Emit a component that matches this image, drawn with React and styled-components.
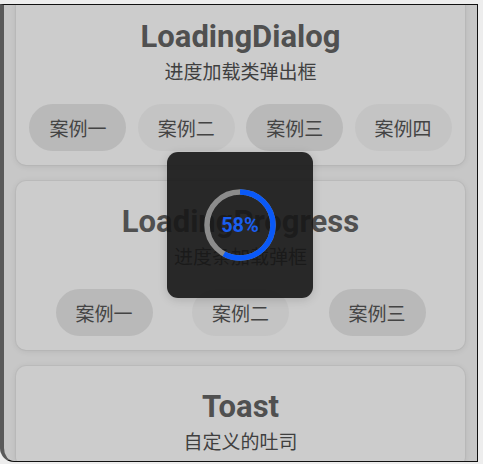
import React from "react"
import styled, { createGlobalStyle } from "styled-components"

const GlobalStyle = createGlobalStyle`
  html, body {
    margin: 0;
    padding: 0;
    background: #ededed;
    font-family: "Roboto", "Noto Sans CJK SC", sans-serif;
  }
`

const Screen = styled.div`
  position: relative;
  box-sizing: border-box;
  margin-top: 4px;
  width: 478px;
  height: 458px;
  overflow: hidden;
  background: #c7c7c7;
  border-top: 1px solid #111;
  border-right: 1px solid #111;
  border-bottom: 1px solid #111;
  border-left: 4px solid #5a5a5a;
  border-bottom-left-radius: 14px;
`

const List = styled.div`
  display: flex;
  flex-direction: column;
  gap: 16px;
  margin-top: -9px;
  padding: 0 12px;
`

const Card = styled.section`
  display: flex;
  flex-direction: column;
  align-items: center;
  padding: 25px 0 14px;
  background: #cccccc;
  border-radius: 10px;
  box-shadow: 0 0 0 1px rgba(0, 0, 0, 0.03), 0 1px 6px rgba(0, 0, 0, 0.1);
`

const Title = styled.h2`
  margin: 0;
  height: 32px;
  line-height: 32px;
  font-size: 31px;
  font-weight: 700;
  color: #505050;
`

const Subtitle = styled.p`
  margin: 6px 0 0;
  height: 24px;
  line-height: 24px;
  font-size: 19px;
  color: #3f3f3f;
  font-family: "Noto Sans CJK SC", sans-serif;
`

const ButtonRow = styled.div`
  align-self: stretch;
  display: flex;
  justify-content: space-evenly;
  margin-top: 21px;
  padding: 0 ${(p) => p.$pad || 0}px;
`

const Pill = styled.button`
  width: 97px;
  height: 47px;
  border: none;
  border-radius: 24px;
  background: ${(p) => (p.$dark ? "#b9b9b9" : "#c4c4c4")};
  color: #444;
  font-size: 19px;
  font-family: "Noto Sans CJK SC", sans-serif;
  padding: 0;
`

const Overlay = styled.div`
  position: absolute;
  left: 163px;
  top: 147px;
  width: 146px;
  height: 146px;
  border-radius: 11px;
  background: rgba(22, 22, 22, 0.9);
  box-shadow: 0 2px 10px rgba(0, 0, 0, 0.15);
  display: flex;
  align-items: center;
  justify-content: center;
`

const Ring = styled.div`
  position: relative;
  width: 72px;
  height: 72px;
  display: flex;
  align-items: center;
  justify-content: center;
`

const Percent = styled.span`
  position: absolute;
  font-size: 20px;
  font-weight: 700;
  color: #1a5ff0;
`

const Progress = ({ value }) => {
  const r = 33
  const c = 2 * Math.PI * r
  return (
    <Ring>
      <svg width="72" height="72" viewBox="0 0 72 72">
        <circle cx="36" cy="36" r={r} fill="none" stroke="#8c8c8c" strokeWidth="5.5" />
        <circle
          cx="36"
          cy="36"
          r={r}
          fill="none"
          stroke="#0a59f7"
          strokeWidth="5.5"
          strokeDasharray={`${(c * value) / 100} ${c}`}
          transform="rotate(-90 36 36)"
        />
      </svg>
      <Percent>{value}%</Percent>
    </Ring>
  )
}

const sections = [
  { title: "LoadingDialog", sub: "进度加载类弹出框", buttons: ["案例一", "案例二", "案例三", "案例四"], pad: 2 },
  { title: "LoadingProgress", sub: "进度条加载弹框", buttons: ["案例一", "案例二", "案例三"] },
  { title: "Toast", sub: "自定义的吐司", buttons: [] },
]

const App = () => {
  return (
    <>
      <GlobalStyle />
      <Screen>
        <List>
          {sections.map((s) => (
            <Card key={s.title}>
              <Title>{s.title}</Title>
              <Subtitle>{s.sub}</Subtitle>
              {s.buttons.length > 0 && (
                <ButtonRow $pad={s.pad}>
                  {s.buttons.map((b, i) => (
                    <Pill key={b} $dark={i % 2 === 0}>
                      {b}
                    </Pill>
                  ))}
                </ButtonRow>
              )}
            </Card>
          ))}
        </List>
        <Overlay>
          <Progress value={58} />
        </Overlay>
      </Screen>
    </>
  )
}

export default App
